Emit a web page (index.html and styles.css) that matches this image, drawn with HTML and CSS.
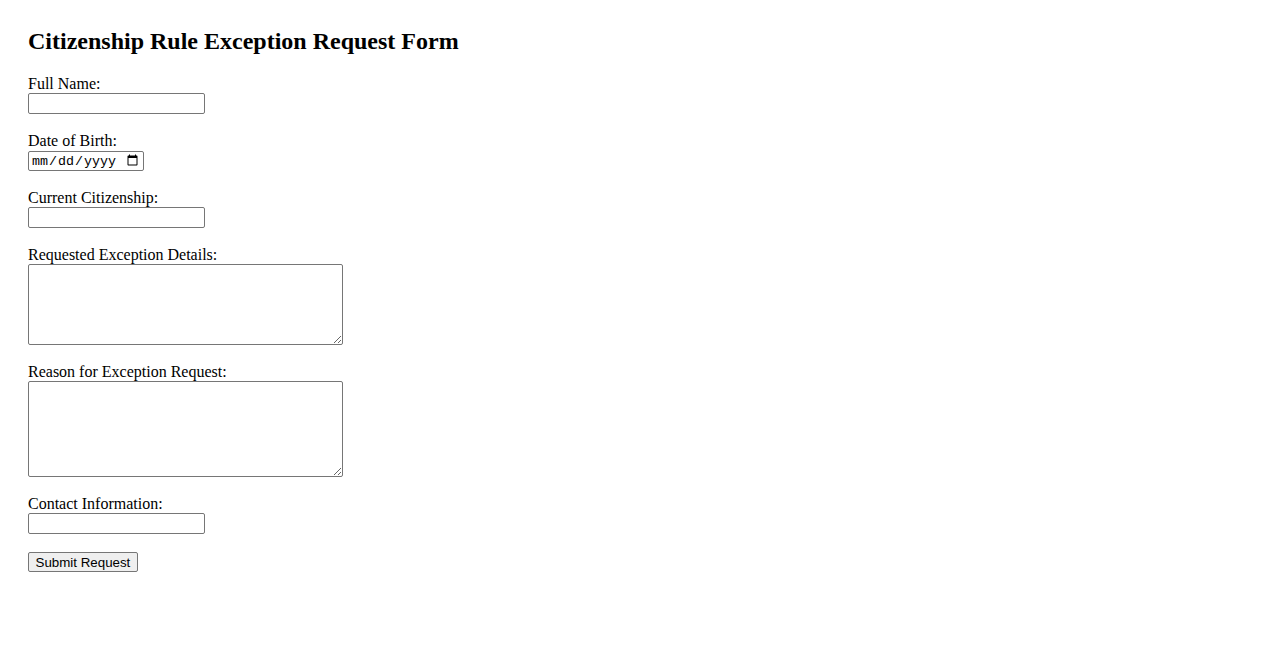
FILE: index.html
```html
<!DOCTYPE html>
<html lang="en">
<head>
<meta charset="utf-8">
<title>Citizenship Rule Exception Request Form</title>
<link rel="stylesheet" href="styles.css">
</head>
<body>
<h2 class="title">Citizenship Rule Exception Request Form</h2>
<form class="form">
  <div class="field">
    <label for="fullName">Full Name:</label>
    <input class="text-input" type="text" id="fullName" name="fullName">
  </div>
  <div class="field">
    <label for="dob">Date of Birth:</label>
    <input class="date-input" type="date" id="dob" name="dob">
  </div>
  <div class="field">
    <label for="citizenship">Current Citizenship:</label>
    <input class="text-input" type="text" id="citizenship" name="citizenship">
  </div>
  <div class="field">
    <label for="details">Requested Exception Details:</label>
    <textarea class="area area-5" id="details" name="details"></textarea>
  </div>
  <div class="field">
    <label for="reason">Reason for Exception Request:</label>
    <textarea class="area area-6" id="reason" name="reason"></textarea>
  </div>
  <div class="field">
    <label for="contact">Contact Information:</label>
    <input class="text-input" type="text" id="contact" name="contact">
  </div>
  <button class="submit" type="submit">Submit Request</button>
</form>
</body>
</html>
```

FILE: styles.css
```css
html, body {
  background: #ffffff;
}

body {
  margin: 0;
  padding: 28px;
  font-family: "Liberation Serif", "Times New Roman", serif;
  font-size: 16px;
  color: #000000;
}

.title {
  font-size: 24px;
  font-weight: bold;
  margin: 0 0 19.92px;
}

.field {
  margin-bottom: 18.1px;
}

.field label {
  display: block;
}

.text-input,
.date-input,
.area,
.submit {
  display: block;
  box-sizing: border-box;
  border: 1px solid #767676;
  border-radius: 2px;
  background: #ffffff;
  color: #000000;
  margin: 0;
}

.text-input {
  width: 177px;
  height: 21px;
  padding: 1px 2px;
  font-family: "Liberation Sans", Arial, sans-serif;
  font-size: 13.333px;
}

.date-input {
  width: 116px;
  height: 20px;
  margin-top: 1px;
  padding: 1px 2px;
  font-family: "Liberation Mono", "Courier New", monospace;
  font-size: 13.333px;
}

.area {
  width: 315px;
  padding: 2px;
  font-family: "Liberation Mono", "Courier New", monospace;
  font-size: 13.333px;
  resize: both;
}

.area-5 {
  height: 81px;
}

.area-6 {
  height: 96px;
}

.submit {
  height: 20px;
  margin-top: 1.5px;
  padding: 1px 6.5px;
  background: #efefef;
  font-family: "Liberation Sans", Arial, sans-serif;
  font-size: 13.333px;
}
```
